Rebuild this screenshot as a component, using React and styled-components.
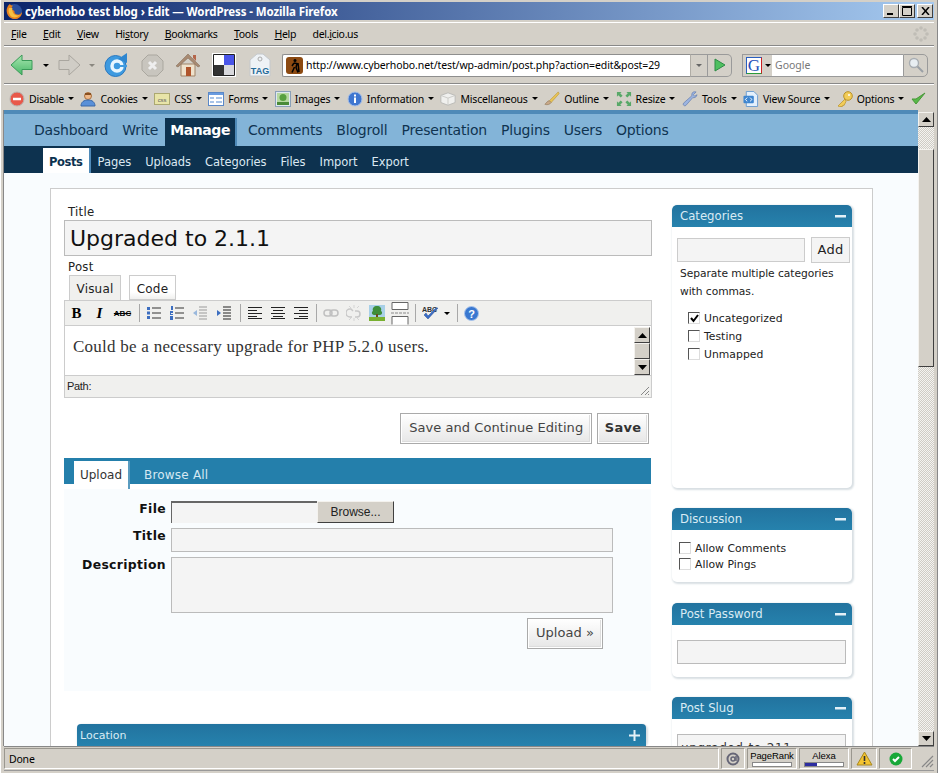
import React from 'react'
import styled, { createGlobalStyle } from 'styled-components'

const Global = createGlobalStyle`
  html, body { margin: 0; padding: 0; height: 100%; overflow: hidden; background: #d4d0c8; }
  * { box-sizing: border-box; }
`

const UI = `"Liberation Sans", Arial, sans-serif`
const VERA = `"DejaVu Sans", Verdana, sans-serif`

const Win = styled.div`
  width: 938px; height: 773px; display: flex; flex-direction: column;
  padding: 2px 3px 2px; background: #d4d0c8; overflow: hidden;
  border-left: 1px solid #fff; border-right: 1px solid #888;
  font-family: ${UI}; font-size: 11px; color: #000;
`
const TitleBar = styled.div`
  flex: none; height: 18px; display: flex; align-items: center; padding: 0 1px 0 2px;
  background: linear-gradient(90deg, #0a246a 0%, #a6caf0 100%);
  color: #fff; font: bold 11.5px "Noto Sans", sans-serif; letter-spacing: -.1px;
`
const TitleText = styled.span` margin-left: 2px; flex: 1; white-space: nowrap; `
const WinBtn = styled.span`
  width: 16px; height: 14px; margin-left: ${p => p.$gap || 0}px; background: #d4d0c8; color: #000;
  display: flex; align-items: center; justify-content: center;
  border: 1px solid; border-color: #fff #404040 #404040 #fff;
`
const MenuBar = styled.div`
  flex: none; height: 24px; margin-top: 2px; display: flex; align-items: center; padding: 0 5px 0 7px;
  border-top: 1px solid #fff; border-bottom: 1px solid #888;
  font: 10.5px "Noto Sans", sans-serif; letter-spacing: -.33px;
`
const MenuItem = styled.span`
  margin-right: ${p => p.$gap}px; white-space: nowrap;
  u { text-decoration: underline; }
`
const Grow = styled.div` flex: 1; `
const NavBar = styled.div`
  flex: none; height: 38px; display: flex; align-items: center; padding: 0 0 0 6px;
  border-top: 1px solid #fff; border-bottom: 1px solid #888;
`
const NavIcon = styled.span`
  flex: none; display: flex; width: ${p => p.$w || 24}px; margin-right: ${p => p.$gap || 0}px; justify-content: center;
`
const Caret = styled.i`
  display: inline-block; flex: none; width: 0; height: 0; margin: ${p => p.$m || '0 0 0 4px'};
  border: 3px solid transparent; border-top: 3px solid ${p => p.$c || '#000'}; border-bottom: 0;
  vertical-align: middle;
`
const UrlBox = styled.div`
  width: 408px; height: 23px; background: #fff; margin-left: 2px; display: flex; align-items: center;
  border: 1px solid #8e8e8e; border-right: 0; border-radius: 2px 0 0 2px; padding-left: 3px;
  font: 10.5px "Noto Sans", sans-serif; letter-spacing: -.1px; white-space: nowrap; overflow: hidden;
`
const UrlText = styled.span` margin-left: 3px; `
const UrlDrop = styled.div`
  width: 18px; height: 23px; background: #d4d0c8; border: 1px solid #9a9a9a; border-left: 1px solid #b0ada6;
  display: flex; align-items: center; justify-content: center;
`
const UrlGo = styled.div`
  width: 24px; height: 23px; background: #d4d0c8; border: 1px solid #9a9a9a; border-left: 0;
  border-radius: 0 5px 5px 0; display: flex; align-items: center; justify-content: center; margin-right: 10px;
`
const SearchPick = styled.div`
  width: 30px; height: 23px; border: 1px solid #9a9a9a; border-right: 0; display: flex; align-items: center; padding-left: 3px;
`
const GIcon = styled.span`
  width: 16px; height: 17px; background: #fff; border: 1px solid #2a5fc0; border-right-color: #c22; border-bottom-color: #2a9a3a;
  color: #2450b8; font: 17px/15px "Liberation Serif", serif; text-align: center;
`
const SearchBox = styled.div`
  width: 131px; height: 23px; background: #fff; border: 1px solid #9a9a9a; border-left: 0; border-right: 0;
  color: #777; font: 10.5px/21px "Noto Sans", sans-serif; padding-left: 3px;
`
const SearchGo = styled.div`
  width: 25px; height: 23px; border: 1px solid #9a9a9a; border-radius: 0 5px 5px 0; display: flex; align-items: center; justify-content: center;
`
const DevBar = styled.div`
  flex: none; height: 26px; display: flex; align-items: center; padding: 2px 0 0 5px; border-top: 1px solid #fff;
  font: 10.5px "Noto Sans", sans-serif; letter-spacing: -.2px; white-space: nowrap;
`
const DevItem = styled.span`
  display: flex; align-items: center; margin-right: 6.5px;
  svg { margin-right: 4px; width: 16px; height: 16px; flex: none; }
`
const Body = styled.div` flex: 1; min-height: 0; display: flex; `
const Page = styled.div`
  width: 914px; overflow: hidden; background: #f9fcfe; font-family: ${VERA}; box-shadow: -1px 0 0 #888;
`
const MainNav = styled.div`
  height: 36px; background: #83b4d8; border-top: 4px solid #4f8ab8; display: flex; align-items: flex-end; padding-left: 23px;
  font-size: 14px; color: #0f3350; letter-spacing: -.2px;
`
const MainLink = styled.span`
  display: block; padding: 0 ${p => p.$on ? 5 : 7}px; height: 28px; line-height: 24px; margin-right: ${p => p.$gap ?? 0}px; white-space: nowrap;
  ${p => p.$on && `background: #0d324f; color: #fff; font-weight: bold; border-right: 2px solid #4f8ab8; letter-spacing: -.4px;`}
`
const SubNav = styled.div`
  height: 27px; background: #0d324f; display: flex; padding-left: 39px; font-size: 11.5px; color: #dbe8f2; letter-spacing: -.05px;
`
const SubLink = styled.span`
  margin-top: 2px; height: 25px; line-height: 29px; padding: 0 ${p => p.$on ? 6 : 7}px; white-space: nowrap;
  ${p => p.$on && `background: #fff; color: #0d324f; font-weight: bold; letter-spacing: -.4px; border-right: 2px solid #4f8ab8;`}
`
const Wrap = styled.div`
  margin: 15px 0 0 46px; width: 823px; background: #fff; border: 1px solid #ccc; border-bottom: 0;
  padding: 16px 19px 0 13px; display: flex; height: 700px;
`
const Main = styled.div` width: 588px; flex: none; `
const Side = styled.div` width: 180px; margin-left: 20px; flex: none; `
const Label = styled.div`
  font-size: 11.7px; letter-spacing: .28px; color: #222; margin-left: 4px; height: 15px; line-height: 15px;
`
const BigInput = styled.div`
  height: 36px; background: #f4f4f4; border: 1px solid #bbb; font-size: 22px; line-height: 36px; padding-left: 5px; color: #111;
  margin-bottom: 4px;
`
const Tabs = styled.div` display: flex; margin: 0 0 0 5px; height: 25px; `
const Tab = styled.span`
  height: 25px; line-height: 26px; font-size: 12px; letter-spacing: .2px; text-align: center; color: #222;
  width: ${p => p.$w}px; margin-right: 8px; border: 1px solid #ccc; border-bottom: ${p => p.$on ? '0' : '1px solid #ccc'};
  background: ${p => p.$on ? '#f0f0ee' : 'linear-gradient(#fff 70%, #f0f0ee)'};
`
const Editor = styled.div` border: 1px solid #ccc; background: #f0f0ee; width: 588px; `
const EdBar = styled.div`
  height: 25px; display: flex; align-items: center; border-bottom: 1px solid #ccc;
`
const EdBtn = styled.span`
  flex: none; width: ${p => p.$w || 23}px; display: flex; justify-content: center; align-items: center;
`
const EdSep = styled.span` flex: none; width: 1px; height: 18px; background: #a8a8a8; margin: 0 2px 0 ${p => p.$l ?? 3}px; `
const BoldGlyph = styled.b` font: bold 15px "Liberation Serif", serif; `
const ItalicGlyph = styled.b` font: italic bold 15px "Liberation Serif", serif; `
const StrikeGlyph = styled.s` font: bold 8px ${UI}; `
const EdBody = styled.div`
  height: 50px; background: #fff; display: flex; font: 17px/20px "Liberation Serif", Georgia, serif; letter-spacing: .25px; color: #333;
  border-bottom: 1px solid #ccc;
`
const EdText = styled.div` flex: 1; padding: 11px 0 0 8px; `
const EdScroll = styled.div` width: 17px; display: flex; flex-direction: column; margin: 1px 0 0; `
const ScrollBtn = styled.div`
  flex: none; width: ${p => p.$w || 16}px; height: ${p => p.$h || 15}px; background: #d4d0c8; display: flex; align-items: center; justify-content: center;
  border: 1px solid; border-color: #f4f2ee #404040 #404040 #f4f2ee;
`
const PathBar = styled.div`
  height: 21px; font: 11px/21px ${UI}; padding-left: 2px; letter-spacing: -.3px; position: relative; color: #222;
`
const Grip = styled.svg` position: absolute; right: 1px; bottom: 1px; `
const SaveRow = styled.div` display: flex; justify-content: flex-end; margin: 15px 3px 0 0; gap: 5px; `
const Btn = styled.span`
  display: block; height: 31px; line-height: 27px; padding: 0 8px; font-size: 13px; color: #444; letter-spacing: .06px; white-space: nowrap;
  background: linear-gradient(#fff, #f0f0f0 60%, #e6e6e6); border: 1px solid #aaa; box-shadow: inset 0 0 0 1px #fff, inset -1px -1px 0 1px #ddd;
  ${p => p.$bold && `font-weight: bold; color: #333; letter-spacing: .34px; padding: 0 6.5px;`}
`
const UpBand = styled.div`
  margin: 14px 1px 0 0; height: 26px; background: #247fab; display: flex; padding: 3px 0 0 10px; color: #d6e8f2; font-size: 12px; letter-spacing: .2px;
`
const UpTab = styled.span`
  height: 28px; margin-right: 14px; line-height: 28px; white-space: nowrap;
  ${p => p.$on && `background: #fff; color: #333; width: 56px; border-right: 2px solid #5a9cc0; text-align: center; letter-spacing: 0;`}
`
const UpBody = styled.div`
  margin: 5px 1px 0 0; background: #f9fcfe; height: 202px; padding-top: 12px;
`
const FormRow = styled.div`
  display: flex; height: ${p => p.$h}px; margin-bottom: ${p => p.$mb ?? 5}px; margin-right: 38px;
`
const FormLabel = styled.div`
  width: 102px; padding-top: 1px; text-align: right; font-weight: bold; font-size: 12.4px; color: #111; line-height: ${p => p.$lh || 13}px; flex: none; letter-spacing: .35px;
`
const FileInput = styled.div`
  width: 146px; margin-left: 5px; height: 22px; background: #f4f4f4; border: 1px solid; border-color: #666 #f0f0f0 #f0f0f0 #666; border-width: 2px 0 0 1px;
`
const Browse = styled.div`
  width: 77px; height: 22px; background: #d4d0c8; border: 1px solid; border-color: #f4f2ee #404040 #404040 #f4f2ee;
  font: 12px/20px ${UI}; text-align: center; color: #222;
`
const Field = styled.div`
  flex: 1; margin-left: 5px; background: #f4f4f4; border: 1px solid #bbb; height: ${p => p.$h}px;
`
const UpBtnRow = styled.div` display: flex; justify-content: flex-end; margin: 0 48px 0 0; `
const Location = styled.div`
  margin: 33px 6px 0 13px; box-shadow: 1px 1px 2px 1px #d8dfe3; border-radius: 5px;
`
const BoxHead = styled.div`
  height: 22px; border-radius: 4px 4px 0 0; background: linear-gradient(#22739f, #2682ad); color: #d9ebf4;
  display: flex; align-items: center; justify-content: space-between; padding: 0 ${p => p.$pr || 6}px 0 ${p => p.$pl || 8}px; font-size: ${p => p.$fs || 11.7}px;
`
const SideBox = styled.div`
  height: ${p => p.$h}px; margin-bottom: ${p => p.$mb || 20}px; background: #fff; border-radius: 5px;
  box-shadow: 1px 1px 2px 1px #d8dfe3; overflow: hidden;
`
const CatInputs = styled.div` display: flex; padding: 11px 0 0 5px; `
const CatInput = styled.div` width: 128px; height: 24px; background: #f4f4f4; border: 1px solid #ccc; `
const AddBtn = styled.div`
  width: 39px; height: 26px; margin: -1px 0 0 6px; background: #f4f4f4; border: 1px solid #ccc; font-size: 13px; line-height: 24px; text-align: center; color: #222; letter-spacing: .2px;
`
const Hint = styled.p` margin: 2px 0 4px 8px; font-size: 10.7px; line-height: 18px; color: #222; letter-spacing: -.05px; `
const CheckList = styled.div` padding-left: ${p => p.$pl}px; padding-top: ${p => p.$pt}px; `
const CheckRow = styled.div`
  display: flex; align-items: center; height: ${p => p.$h}px; font-size: 10.8px; color: #222; letter-spacing: .03px;
`
const Box = styled.span`
  width: 12px; height: 12px; margin-right: 4px; background: #fff; border: 1px solid; border-color: #555 #ddd #ddd #555; display: flex; align-items: center; justify-content: center;
`
const SideField = styled.div`
  margin: 15px 6px 0 5px; height: 24px; background: #f4f4f4; border: 1px solid #bbb; overflow: hidden; font-size: 12px; line-height: 26px; padding-left: 3px; letter-spacing: .6px; color: #333;
`
const Scroll = styled.div`
  width: 16px; display: flex; flex-direction: column; padding-top: 2px;
  background: #d4d0c8;
`
const Dither = styled.div`
  flex: ${p => p.$h ? 'none' : 1}; height: ${p => p.$h ? p.$h + 'px' : 'auto'};
  background: repeating-conic-gradient(#f4f3f0 0 25%, #cfccc5 0 50%) 0 0 / 2px 2px;
`
const Thumb = styled.div`
  flex: none; height: 218px; background: #d4d0c8; border: 1px solid; border-color: #f4f2ee #404040 #404040 #f4f2ee;
`
const Status = styled.div`
  flex: none; height: 25px; display: flex; align-items: stretch; padding: 1px 0;
  border-top: 1px solid #888; border-bottom: 1px solid #999;
`
const Pane = styled.div`
  margin-right: 2px; flex: ${p => p.$w ? 'none' : 1}; width: ${p => p.$w}px; border: 1px solid; border-color: #9a978f #fff #fff #9a978f;
  display: flex; align-items: center; justify-content: center; flex-direction: column; font: 9.5px/10px ${UI}; letter-spacing: -.1px;
  ${p => p.$left && `align-items: flex-start; padding-left: 4px; font: 10.5px "Noto Sans", sans-serif; letter-spacing: -.2px;`}
`
const Meter = styled.div`
  width: 40px; height: 5px; border: 1px solid #888; background: #fff; margin-top: 1px;
`
const MeterFill = styled.div` height: 100%; background: #2c2ca0; `
const StatusGrip = styled.svg` flex: none; `

const Down = ({ up }) => (
  <svg width="9" height="5" viewBox="0 0 9 5" style={up ? { transform: 'rotate(180deg)' } : undefined}><path d="M0 0h9L4.5 5z" /></svg>
)

const Firefox = () => (
  <svg width="17" height="17" viewBox="0 0 17 17">
    <circle cx="8.5" cy="8.5" r="7.5" fill="#2a4f9c" />
    <path d="M4 1c-3 2-4 6-3 9 1 4 5 6.500 9 6 4-.5 6-4 6-7-1 2-3 3-5 2.500-2-.5-3-2-2.500-3.500L6 6.500c-1-1 0-3 1-4C5.500 2.500 4.500 2 4 1z" fill="#e8821e" />
    <path d="M3 5c-1 3 0 7 3 9 3 1 6 0 8-2-3 1-6 0-7-2.500C6 7.500 6 6 6.500 5z" fill="#f6c142" />
  </svg>
)
const Back = () => (
  <svg width="24" height="22" viewBox="0 0 24 22">
    <defs><linearGradient id="bk" x1="0" y1="0" x2="0" y2="1"><stop offset="0" stopColor="#a8e6b0" /><stop offset="1" stopColor="#48b868" /></linearGradient></defs>
    <path d="M1 11 12 1v5.500h10v9H12V21z" fill="url(#bk)" stroke="#3a9a58" />
  </svg>
)
const Forward = () => (
  <svg width="24" height="22" viewBox="0 0 24 22"><path d="M23 11 12 1v5.500H2v9h10V21z" fill="#d0cdc6" stroke="#a9a69f" /></svg>
)
const Reload = () => (
  <svg width="24" height="26" viewBox="0 0 24 26">
    <circle cx="11.500" cy="14" r="10.500" fill="#3e9ae0" stroke="#2a78c0" />
    <circle cx="13" cy="14" r="5" fill="none" stroke="#e8f6ff" strokeWidth="3.500" />
    <path d="M13 13h10v2H13z" fill="#3e9ae0" />
    <path d="M14 7 23 1v10z" fill="#2e86d0" />
  </svg>
)
const Stop = () => (
  <svg width="23" height="23" viewBox="0 0 23 23">
    <path d="M7 1h9l6 6v9l-6 6H7l-6-6V7z" fill="#c8c5be" stroke="#aaa79f" />
    <path d="M8 8l7 7M15 8l-7 7" stroke="#eee" strokeWidth="3" />
  </svg>
)
const Home = () => (
  <svg width="24" height="24" viewBox="0 0 24 24">
    <path d="M5 11h14v12H5z" fill="#efe2cc" stroke="#a08468" />
    <path d="M0 13 12 1l12 12-2 1L12 5 2 14z" fill="#a88a72" stroke="#7c6650" strokeWidth=".5" />
    <path d="M17 2h3v6l-3-3z" fill="#b5664a" />
    <path d="M10 14h5v9h-5z" fill="#b0552c" />
  </svg>
)
const Delicious = () => (
  <svg width="24" height="24" viewBox="0 0 24 24">
    <path d="M0 0h24v24H0z" fill="#fff" />
    <path d="M12 2h10v10H12z" fill="#4a55e8" />
    <path d="M2 12h10v10H2z" fill="#333" />
    <path d="M12 12h10v10H12z" fill="#d8d8dc" />
    <path d="M2 2h10v10H2z" fill="#fff" />
    <path d="M1.500 1.500h21v21h-21z" fill="none" stroke="#222" />
  </svg>
)
const TagIcon = () => (
  <svg width="22" height="24" viewBox="0 0 22 24">
    <path d="M1 7 8 1h6l7 6v16H1z" fill="#eef2f6" stroke="#c4c8cc" />
    <circle cx="11" cy="6" r="2" fill="none" stroke="#aaa" />
    <text x="11" y="21" fontSize="9" fontWeight="bold" fontFamily="Liberation Sans" fill="#246a98" textAnchor="middle">TAG</text>
  </svg>
)
const Hiker = () => (
  <svg width="17" height="17" viewBox="0 0 17 17">
    <rect width="17" height="17" rx="3" fill="#8c4a12" />
    <circle cx="9" cy="3.500" r="1.500" />
    <path d="M8 6l3 .5-1 4 2 5M8.500 10 6 15.500M8 6 6 9M12 6l1 9" stroke="#000" strokeWidth="1.500" fill="none" />
  </svg>
)
const Go = () => (
  <svg width="12" height="14" viewBox="0 0 12 14"><path d="M1 1 11 7 1 13z" fill="#4fc060" stroke="#2e8a46" /></svg>
)
const Glass = () => (
  <svg width="16" height="16" viewBox="0 0 16 16">
    <circle cx="6" cy="6" r="4.500" fill="#e8eef2" stroke="#a8adb2" strokeWidth="1.400" />
    <path d="M9.500 9.500 15 15" stroke="#9aa0a6" strokeWidth="2" />
  </svg>
)
const Spinner = () => (
  <svg width="16" height="16" viewBox="0 0 16 16">
    {[[8, 2], [12, 4], [14, 8], [12, 12], [8, 14], [4, 12], [2, 8], [4, 4]].map(([x, y]) => (
      <circle key={x + '-' + y} cx={x} cy={y} r="1.800" fill="#c0bdb6" />
    ))}
  </svg>
)

const DevIcons = {
  disable: <svg viewBox="0 0 16 16"><circle cx="8" cy="8" r="7" fill="#e8584a" stroke="#b8b4b0" /><path d="M4 8h8" stroke="#fff" strokeWidth="2.500" /></svg>,
  cookies: <svg viewBox="0 0 16 16"><circle cx="8" cy="5" r="3.500" fill="#f0b888" stroke="#a87040" /><path d="M5 2h6v2H5z" fill="#8a5020" /><path d="M1 15c0-4 3-6 7-6s7 2 7 6z" fill="#5a90d8" stroke="#3a68a8" /></svg>,
  css: <svg viewBox="0 0 16 12"><rect x=".5" y=".5" width="15" height="11" fill="#e8e4a8" stroke="#aca870" /><text x="8" y="8.500" fontSize="6" fontFamily="Liberation Sans" fill="#666" textAnchor="middle">css</text></svg>,
  forms: <svg viewBox="0 0 16 14"><rect x=".5" y=".5" width="15" height="13" fill="#fff" stroke="#5a88c8" /><path d="M1 1h14v2H1z" fill="#6a9ce0" /><path d="M2 5h4v2H2zM8 5h6v2H8zM2 9h4v2H2zM8 9h6v2H8z" fill="#a8c4e8" /></svg>,
  images: <svg viewBox="0 0 16 16"><rect x=".5" y=".5" width="15" height="15" fill="#dfe8f0" stroke="#8aa0b8" /><path d="M2 2h12v12H2z" fill="#b6d8a0" /><circle cx="8" cy="6.500" r="3.500" fill="#58a040" /><path d="M2 11h12v3H2z" fill="#4a8a38" /></svg>,
  info: <svg viewBox="0 0 16 16"><circle cx="8" cy="8" r="7" fill="#3f76d0" stroke="#a8c0e8" /><path d="M7 6.500h2V12H7zM7 3.500h2v2H7z" fill="#fff" /></svg>,
  misc: <svg viewBox="0 0 18 16"><path d="M9 1 17 4v8l-8 3-8-3V4z" fill="#f0f0ee" stroke="#b8b8b4" /><path d="M1 4l8 3 8-3M9 7v8" stroke="#c8c8c4" fill="none" /></svg>,
  outline: <svg viewBox="0 0 18 16"><path d="M16 0 6 10l2 2L17 2z" fill="#e8c458" stroke="#b89028" strokeWidth=".6" /><path d="M6 10c-2 0-3 2-5 4 3 1 6 0 7-2z" fill="#c8a888" stroke="#8a7050" strokeWidth=".6" /></svg>,
  resize: <svg viewBox="0 0 17 17"><path d="M1 1h5L4.500 2.500 7 5 5 7 2.500 4.500 1 6zM16 1v5l-1.500-1.500L12 7l-2-2 2.500-2.500L11 1zM1 16v-5l1.500 1.500L5 10l2 2-2.500 2.500L6 16zM16 16h-5l1.500-1.500L10 12l2-2 2.500 2.500L16 11z" fill="#58a868" /></svg>,
  tools: <svg viewBox="0 0 17 17"><path d="M15 1c-2-.5-4 0-4.500 2-.2 1 0 1.500 0 2L1.500 13c-1 1.500 1 3.500 2.500 2.500L11.500 7c1 .5 4 0 4.500-3l-2.500 1.500L12 4z" fill="#9cb4e0" stroke="#5e78ac" strokeWidth=".7" /></svg>,
  source: <svg viewBox="0 0 16 17"><path d="M3 .5h8l4 4v12H3z" fill="#e4f0fc" stroke="#6a9cd0" /><rect y="5" width="11" height="8" rx="1" fill="#3f86d0" /><path d="M4 7 2 9l2 2M7 7l2 2-2 2" stroke="#fff" fill="none" /></svg>,
  options: <svg viewBox="0 0 16 16"><circle cx="11" cy="5" r="4.300" fill="#f2cc58" stroke="#b89028" /><path d="M8 8 1 15l2 1 1-1 1 1 1-2 1 .5 2-4z" fill="#f2cc58" stroke="#b89028" strokeWidth=".7" /><circle cx="12" cy="4" r="1" fill="#fff" /></svg>,
}

const Ed = {
  list: (
    <svg width="14" height="14" viewBox="0 0 14 14"><path d="M0 1h3v3H0zM0 5.500h3v3H0zM0 10h3v3H0z" fill="#3c6ec0" /><path d="M5 2h9M5 7h9M5 12h9" stroke="#333" strokeWidth="1.200" /></svg>
  ),
  num: (
    <svg width="14" height="14" viewBox="0 0 14 14"><path d="M1 0h2v4H1zM0 5h3v2H1v1h2v1H0zM0 10h3v4H0z" fill="#3c6ec0" /><path d="M5 2h9M5 7h9M5 12h9" stroke="#333" strokeWidth="1.200" /></svg>
  ),
  out: (
    <svg width="15" height="14" viewBox="0 0 15 14"><path d="M6 1h8M6 4h8M6 7h8M6 10h8M6 13h8" stroke="#9a9a9a" /><path d="M0 7 4 4v6z" fill="#9ab8dc" /></svg>
  ),
  ind: (
    <svg width="15" height="14" viewBox="0 0 15 14"><path d="M6 1h8M6 4h8M6 7h8M6 10h8M6 13h8" stroke="#222" /><path d="M4 7 0 4v6z" fill="#3c6ec0" /></svg>
  ),
  left: <svg width="14" height="12" viewBox="0 0 14 12"><path d="M0 .5h14M0 3.500h9M0 6.500h14M0 9.500h9M0 11.500h14" stroke="#222" /></svg>,
  center: <svg width="14" height="12" viewBox="0 0 14 12"><path d="M0 .5h14M2 3.500h10M0 6.500h14M2 9.500h10M0 11.500h14" stroke="#222" /></svg>,
  right: <svg width="14" height="12" viewBox="0 0 14 12"><path d="M0 .5h14M5 3.500h9M0 6.500h14M5 9.500h9M0 11.500h14" stroke="#222" /></svg>,
  link: <svg width="16" height="10" viewBox="0 0 16 10"><rect x="1" y="2" width="8" height="6" rx="3" fill="none" stroke="#c0c0c0" strokeWidth="1.500" /><rect x="7" y="2" width="8" height="6" rx="3" fill="none" stroke="#c0c0c0" strokeWidth="1.500" /></svg>,
  unlink: <svg width="16" height="16" viewBox="0 0 16 16"><path d="M7 6 5 4H4a3 3 0 0 0 0 8h2M9 6h2a3 3 0 0 1 0 6H9" fill="none" stroke="#c8c8c8" strokeWidth="1.500" /><path d="M8 0v3M3 1l2 2M13 1l-2 2M8 13v3M3 15l2-2M13 15l-2-2" stroke="#d4d4d4" /></svg>,
  img: <svg width="16" height="16" viewBox="0 0 16 16"><path d="M0 0h16v16H0z" fill="#a8d0e8" /><path d="M8 1c3 0 5 2 4 5 2 1 1 4-1 4H5C3 10 2 7 4 6 3 3 5 1 8 1z" fill="#3e8e3a" /><path d="M7 9h2v4H7z" fill="#6a4a20" /><path d="M0 12h16v4H0z" fill="#78b030" /></svg>,
  more: <svg width="18" height="23" viewBox="0 0 18 23"><path d="M1 .5h16v7H1zM1 22.500V14.500h16v8" fill="#fff" stroke="#666" /><path d="M0 11h18" stroke="#888" strokeDasharray="3 1" /></svg>,
  spell: (
    <svg width="18" height="16" viewBox="0 0 18 16">
      <text x="0" y="7" fontSize="7" fontWeight="bold" fontFamily="Liberation Sans" fill="#333">ABC</text>
      <path d="M2 10l4 4L16 3l-2 0-8 8-2-3z" fill="#3a6cc8" stroke="#28508e" strokeWidth=".5" />
    </svg>
  ),
  help: <svg width="15" height="15" viewBox="0 0 15 15"><circle cx="7.500" cy="7.500" r="7" fill="#3a78d0" stroke="#a8c4ec" /><text x="7.500" y="11.500" fontSize="11" fontWeight="bold" fontFamily="Liberation Sans" fill="#fff" textAnchor="middle">?</text></svg>,
}

const Minus = () => <svg width="11" height="3" viewBox="0 0 11 3"><path d="M0 0h11v2.500H0z" fill="#e4f0f7" /></svg>
const Plus = () => <svg width="11" height="11" viewBox="0 0 11 11"><path d="M0 4.500h11V6.500H0zM4.500 0h2v11h-2z" fill="#e4f0f7" /></svg>
const Tick = () => <svg width="9" height="9" viewBox="0 0 9 9"><path d="M1 4l2.500 3L8 1" fill="none" stroke="#000" strokeWidth="2" /></svg>

const devItems = [
  ['disable', 'Disable'], ['cookies', 'Cookies'], ['css', 'CSS'], ['forms', 'Forms'], ['images', 'Images'],
  ['info', 'Information'], ['misc', 'Miscellaneous'], ['outline', 'Outline'], ['resize', 'Resize'], ['tools', 'Tools'],
  ['source', 'View Source'], ['options', 'Options'],
]

const App = () => {
  return (
    <Win>
      <Global />
      <TitleBar>
        <Firefox />
        <TitleText>cyberhobo test blog › Edit — WordPress - Mozilla Firefox</TitleText>
        <WinBtn><svg width="8" height="8" viewBox="0 0 8 8"><path d="M0 6h6v2H0z" /></svg></WinBtn>
        <WinBtn><svg width="10" height="10" viewBox="0 0 10 10"><path d="M.5 1.500h9v8h-9zM0 .5h10" fill="none" stroke="#000" /></svg></WinBtn>
        <WinBtn $gap={2}><svg width="9" height="8" viewBox="0 0 9 8"><path d="M1 0l7 8M8 0 1 8" stroke="#000" strokeWidth="1.500" /></svg></WinBtn>
      </TitleBar>
      <MenuBar>
        <MenuItem $gap={16.5}><u>F</u>ile</MenuItem>
        <MenuItem $gap={16.5}><u>E</u>dit</MenuItem>
        <MenuItem $gap={16.5}><u>V</u>iew</MenuItem>
        <MenuItem $gap={16.5}>Hi<u>s</u>tory</MenuItem>
        <MenuItem $gap={16.5}><u>B</u>ookmarks</MenuItem>
        <MenuItem $gap={16.5}><u>T</u>ools</MenuItem>
        <MenuItem $gap={16.5}><u>H</u>elp</MenuItem>
        <MenuItem $gap={0}>del.<u>i</u>cio.us</MenuItem>
        <Grow />
        <Spinner />
      </MenuBar>
      <NavBar>
        <NavIcon $w={24}><Back /></NavIcon>
        <NavIcon $w={17} $gap={6}><Caret $m="0 0 0 6px" /></NavIcon>
        <NavIcon $w={24}><Forward /></NavIcon>
        <NavIcon $w={15} $gap={7}><Caret $c="#8a8780" $m="0 0 0 7px" /></NavIcon>
        <NavIcon $w={26} $gap={12}><Reload /></NavIcon>
        <NavIcon $w={23} $gap={12}><Stop /></NavIcon>
        <NavIcon $w={24} $gap={12}><Home /></NavIcon>
        <NavIcon $w={24} $gap={13}><Delicious /></NavIcon>
        <NavIcon $w={22} $gap={9}><TagIcon /></NavIcon>
        <UrlBox><Hiker /><UrlText>http://www.cyberhobo.net/test/wp-admin/post.php?action=edit&amp;post=29</UrlText></UrlBox>
        <UrlDrop><Caret $c="#666" $m="0" /></UrlDrop>
        <UrlGo><Go /></UrlGo>
        <SearchPick><GIcon>G</GIcon><Caret $m="0 0 0 3px" /></SearchPick>
        <SearchBox>Google</SearchBox>
        <SearchGo><Glass /></SearchGo>
      </NavBar>
      <DevBar>
        {devItems.map(([key, name]) => (
          <DevItem key={key}>{DevIcons[key]}{name}<Caret /></DevItem>
        ))}
        <svg width="15" height="13" viewBox="0 0 15 13"><path d="M1 7l4 5L14 1 5 7z" fill="#58b848" stroke="#489838" /></svg>
      </DevBar>
      <Body>
        <Page>
          <MainNav>
            <MainLink>Dashboard</MainLink>
            <MainLink>Write</MainLink>
            <MainLink $on $gap={4}>Manage</MainLink>
            <MainLink>Comments</MainLink>
            <MainLink>Blogroll</MainLink>
            <MainLink>Presentation</MainLink>
            <MainLink>Plugins</MainLink>
            <MainLink>Users</MainLink>
            <MainLink>Options</MainLink>
          </MainNav>
          <SubNav>
            <SubLink $on>Posts</SubLink>
            <SubLink>Pages</SubLink>
            <SubLink>Uploads</SubLink>
            <SubLink>Categories</SubLink>
            <SubLink>Files</SubLink>
            <SubLink>Import</SubLink>
            <SubLink>Export</SubLink>
          </SubNav>
          <Wrap>
            <Main>
              <Label>Title</Label>
              <BigInput>Upgraded to 2.1.1</BigInput>
              <Label>Post</Label>
              <Tabs>
                <Tab $on $w={52}>Visual</Tab>
                <Tab $w={47}>Code</Tab>
              </Tabs>
              <Editor>
                <EdBar>
                  <EdBtn><BoldGlyph>B</BoldGlyph></EdBtn>
                  <EdBtn><ItalicGlyph>I</ItalicGlyph></EdBtn>
                  <EdBtn><StrikeGlyph>ABC</StrikeGlyph></EdBtn>
                  <EdSep $l={5} />
                  <EdBtn>{Ed.list}</EdBtn>
                  <EdBtn>{Ed.num}</EdBtn>
                  <EdBtn $w={24}>{Ed.out}</EdBtn>
                  <EdBtn $w={24}>{Ed.ind}</EdBtn>
                  <EdSep $l={4} />
                  <EdBtn>{Ed.left}</EdBtn>
                  <EdBtn>{Ed.center}</EdBtn>
                  <EdBtn>{Ed.right}</EdBtn>
                  <EdSep $l={4} />
                  <EdBtn>{Ed.link}</EdBtn>
                  <EdBtn>{Ed.unlink}</EdBtn>
                  <EdBtn>{Ed.img}</EdBtn>
                  <EdBtn>{Ed.more}</EdBtn>
                  <EdSep $l={4} />
                  <EdBtn $w={26}>{Ed.spell}</EdBtn>
                  <Caret $m="0" />
                  <EdSep $l={7} />
                  <EdBtn>{Ed.help}</EdBtn>
                </EdBar>
                <EdBody>
                  <EdText>Could be a necessary upgrade for PHP 5.2.0 users.</EdText>
                  <EdScroll>
                    <ScrollBtn $h={16}><Down up /></ScrollBtn>
                    <ScrollBtn $h={16} />
                    <ScrollBtn $h={16}><Down /></ScrollBtn>
                  </EdScroll>
                </EdBody>
                <PathBar>
                  Path:
                  <Grip width="11" height="11" viewBox="0 0 11 11"><path d="M10 2 2 10M10 6l-4 4M10 9l-1 1" stroke="#888" /></Grip>
                </PathBar>
              </Editor>
              <SaveRow>
                <Btn>Save and Continue Editing</Btn>
                <Btn $bold>Save</Btn>
              </SaveRow>
              <UpBand>
                <UpTab $on>Upload</UpTab>
                <UpTab>Browse All</UpTab>
              </UpBand>
              <UpBody>
                <FormRow $h={22}>
                  <FormLabel>File</FormLabel>
                  <FileInput />
                  <Browse>Browse...</Browse>
                </FormRow>
                <FormRow $h={24}>
                  <FormLabel>Title</FormLabel>
                  <Field $h={24} />
                </FormRow>
                <FormRow $h={56}>
                  <FormLabel $lh={14}>Description</FormLabel>
                  <Field $h={56} />
                </FormRow>
                <UpBtnRow><Btn>Upload »</Btn></UpBtnRow>
              </UpBody>
              <Location>
                <BoxHead $pl={3} $pr={6} $fs={11}>Location<Plus /></BoxHead>
              </Location>
            </Main>
            <Side>
              <SideBox $h={283}>
                <BoxHead>Categories<Minus /></BoxHead>
                <CatInputs><CatInput /><AddBtn>Add</AddBtn></CatInputs>
                <Hint>Separate multiple categories with commas.</Hint>
                <CheckList $pl={16} $pt={4}>
                  <CheckRow $h={18}><Box><Tick /></Box>Uncategorized</CheckRow>
                  <CheckRow $h={18}><Box />Testing</CheckRow>
                  <CheckRow $h={18}><Box />Unmapped</CheckRow>
                </CheckList>
              </SideBox>
              <SideBox $h={74} $mb={21}>
                <BoxHead>Discussion<Minus /></BoxHead>
                <CheckList $pl={7} $pt={10}>
                  <CheckRow $h={16}><Box />Allow Comments</CheckRow>
                  <CheckRow $h={16}><Box />Allow Pings</CheckRow>
                </CheckList>
              </SideBox>
              <SideBox $h={74}>
                <BoxHead>Post Password<Minus /></BoxHead>
                <SideField />
              </SideBox>
              <SideBox $h={60}>
                <BoxHead>Post Slug<Minus /></BoxHead>
                <SideField>upgraded-to-211</SideField>
              </SideBox>
            </Side>
          </Wrap>
        </Page>
        <Scroll>
          <ScrollBtn><Down up /></ScrollBtn>
          <Dither $h={22} />
          <Thumb />
          <Dither />
          <ScrollBtn><Down /></ScrollBtn>
        </Scroll>
      </Body>
      <Status>
        <Pane $left>Done</Pane>
        <Pane $w={24}><svg width="16" height="16" viewBox="0 0 16 16"><circle cx="8" cy="8" r="5.500" fill="none" stroke="#667" strokeWidth="2" /><circle cx="8" cy="8" r="2" fill="none" stroke="#667" strokeWidth="1.500" /><path d="M11 5v5" stroke="#667" strokeWidth="1.500" /></svg></Pane>
        <Pane $w={50}>PageRank<Meter /></Pane>
        <Pane $w={50}>Alexa<Meter><MeterFill style={{ width: '32%' }} /></Meter></Pane>
        <Pane $w={26}><svg width="17" height="15" viewBox="0 0 17 15"><path d="M8.500 1 16 14H1z" fill="#f4c430" stroke="#a88820" /><path d="M7.700 5h1.600v5H7.700zM7.700 11h1.600v2H7.700z" fill="#333" /></svg></Pane>
        <Pane $w={33}><svg width="14" height="14" viewBox="0 0 14 14"><circle cx="7" cy="7" r="6.500" fill="#18a838" /><path d="M4 7l2 2 4-4" stroke="#fff" strokeWidth="2" fill="none" /></svg></Pane>
        <StatusGrip width="20" height="21" viewBox="0 0 20 21"><path d="M19 8 8 19M19 12l-7 7M19 16l-3 3" stroke="#888" strokeWidth="1.200" /></StatusGrip>
      </Status>
    </Win>
  )
}

export default App
